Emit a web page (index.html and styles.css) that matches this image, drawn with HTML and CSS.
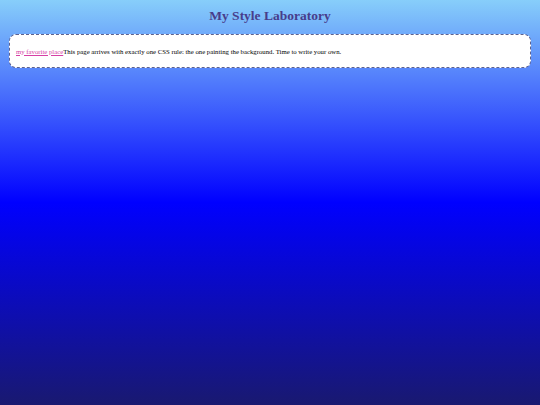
FILE: index.html
```html
<!DOCTYPE html>
<html lang="en">
<head>
<meta charset="utf-8">
<title>My Style Laboratory</title>
<link rel="stylesheet" href="styles.css">
</head>
<body class="page">
  <h1 class="title">My Style Laboratory</h1>
  <div class="card">
    <p class="card-text"><a class="fav-link" href="#">my favorite place</a>This page arrives with exactly one CSS rule: the one painting the background. Time to write your own.</p>
  </div>
</body>
</html>
```
FILE: styles.css
```css
html {
  height: 100%;
  background: linear-gradient(#87cefa, #0000ff 50%, #191970);
}
.page {
  margin: 0;
  padding: 0 9px;
  font-family: "Liberation Serif", "Times New Roman", serif;
}
.title {
  margin: 0;
  padding: 8px 0 10px;
  height: 16px;
  line-height: 16px;
  font-size: 13.5px;
  font-weight: bold;
  text-align: center;
  color: #483d8b;
}
.card {
  height: 32px;
  display: flex;
  align-items: center;
  padding: 0 6px;
  background: #ffffff;
  border: 1.7px dashed #5d6290;
  border-radius: 7px;
}
.card-text {
  margin: 0;
  font-size: 6.75px;
  color: #000;
}
.fav-link {
  color: #d63fa6;
}
```
